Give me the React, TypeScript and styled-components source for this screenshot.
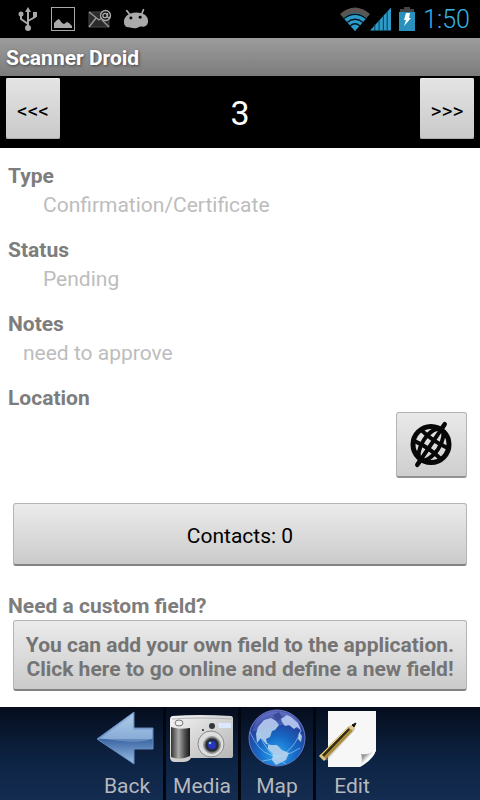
import React from "react";
import styled, { createGlobalStyle } from "styled-components";

const GlobalStyle = createGlobalStyle`
  * { box-sizing: border-box; }
  body { margin: 0; background: #fff; font-family: Roboto, "Noto Sans", sans-serif; font-size: 21px; line-height: 25px; }
  button { font: inherit; cursor: pointer; }
  svg { display: block; overflow: visible; }
`;

const Screen = styled.div`
  display: flex;
  flex-direction: column;
  min-height: 100vh;
`;

const StatusBar = styled.header`
  display: flex;
  justify-content: space-between;
  align-items: center;
  height: 38px;
  padding: 0 10px 0 18px;
  background: #000;
`;

const StatusGroup = styled.div<{ $gap: number }>`
  display: flex;
  align-items: center;
  gap: ${(p) => p.$gap}px;
`;

const Clock = styled.time`
  margin-left: 8px;
  color: #33b5e5;
  font-size: 25px;
  line-height: 36px;
  padding-top: 2px;
  font-weight: 300;
`;

const TitleBar = styled.h1`
  margin: 0;
  height: 38px;
  padding: 0 6px;
  background: linear-gradient(#9c9c9c, #7c7c7c);
  color: #fff;
  font-size: 21px;
  line-height: 40px;
  font-weight: 700;
  text-shadow: 1px 1px 3px #444;
`;

const Pager = styled.nav`
  display: flex;
  justify-content: space-between;
  align-items: flex-start;
  height: 72px;
  padding: 2px 6px;
  background: #000;
`;

const PageNumber = styled.span`
  color: #fff;
  font-size: 34px;
  line-height: 70px;
`;

const PagerButton = styled.button`
  width: 54px;
  height: 61px;
  padding: 6px 0 0;
  border: 0;
  border-radius: 2px;
  background: linear-gradient(#e4e4e4, #c9c9c9);
  box-shadow: inset 0 1px #eee, inset 0 -1px #aaa;
  color: #000;
  font-size: 21px;
`;

const Content = styled.main`
  display: flex;
  flex-direction: column;
  flex: 1;
  padding: 16px 13px 15px 8px;
  background: #fff;
`;

const Fields = styled.dl`
  display: flex;
  flex-direction: column;
  margin: 0;
`;

const Field = styled.div`
  height: 74px;
`;

const FieldLabel = styled.dt`
  color: #7d7d7d;
  font-weight: 700;
  line-height: 25px;
`;

const FieldValue = styled.dd<{ $indent: number }>`
  margin: 4px 0 0;
  padding-left: ${(p) => p.$indent}px;
  color: #bdbdbd;
`;

const LocationField = styled.div`
  display: flex;
  flex-direction: column;
`;

const LocationValue = styled.dd`
  display: flex;
  justify-content: flex-end;
  margin: 1px 0 0;
  padding-bottom: 25px;
`;

const PanelButton = styled.button<{ $tall?: boolean }>`
  min-height: ${(p) => (p.$tall ? 71 : 63)}px;
  margin-left: 5px;
  padding: 4px 8px 0;
  border: 1px solid #b4b4b4;
  border-bottom: 2px solid #828282;
  border-radius: 3px;
  background: linear-gradient(#ebebeb, #cbcbcb);
  color: ${(p) => (p.$tall ? "#747474" : "#000")};
  font-weight: ${(p) => (p.$tall ? 700 : 400)};
  line-height: 24px;
`;

const GlobeButton = styled.button`
  display: grid;
  place-items: center;
  width: 71px;
  height: 66px;
  padding: 0;
  border: 1px solid #b4b4b4;
  border-bottom: 2px solid #929292;
  border-radius: 3px;
  background: linear-gradient(#e9e9e9, #cecece);
`;

const Prompt = styled.h2`
  margin: 28px 0 1px;
  color: #7d7d7d;
  font-size: 21px;
  line-height: 25px;
  font-weight: 700;
`;

const TabBar = styled.footer`
  display: flex;
  justify-content: center;
  height: 93px;
  padding-left: 2px;
  background: linear-gradient(#050d1d, #0d2445 60%, #142c50);
`;

const Tab = styled.button`
  display: flex;
  flex-direction: column;
  align-items: center;
  width: 75px;
  padding: 0;
  border: 0;
  border-right: 3px solid #02060f;
  background: transparent;
  background-clip: padding-box;
  color: #b5b8bd;
  line-height: 27px;

  &:last-child {
    border-right-color: transparent;
  }
`;

const TabIcon = styled.span`
  display: grid;
  place-items: center;
  flex-shrink: 0;
  height: 64px;
  margin-bottom: 2px;
`;

const UsbIcon = () => (
  <svg width="20" height="26" viewBox="0 0 20 26" fill="none" stroke="#a8a8a8" strokeWidth="2">
    <path d="M10 5v17M10 18l-7-5V8M10 15l7-4V8" />
    <path d="M10 1l3 5H7z" fill="#a8a8a8" stroke="none" />
    <circle cx="10" cy="22" r="3" fill="#a8a8a8" stroke="none" />
    <circle cx="3" cy="8" r="2.5" fill="#a8a8a8" stroke="none" />
    <path d="M15 6h4v5h-4z" fill="#a8a8a8" stroke="none" />
  </svg>
);

const PictureIcon = () => (
  <svg width="24" height="24" viewBox="0 0 24 24">
    <rect x="0.5" y="0.5" width="23" height="23" fill="none" stroke="#aaa" />
    <path d="M3 21v-5l3-3 2-1 3 4 2 1 3-2 2 1 3 3v2z" fill="#aaa" />
  </svg>
);

const MailIcon = () => (
  <svg width="22" height="20" viewBox="0 0 22 20" fill="none">
    <path d="M1 3h20v15H1z" fill="#2b2b2b" stroke="#484848" />
    <path d="M1 3l10 8 3-2M1 18l7-9M21 18l-7-7" stroke="#999" strokeWidth="1.4" />
    <circle cx="17.5" cy="6.5" r="5" fill="#111" stroke="#aaa" strokeWidth="1.3" />
    <circle cx="17" cy="6.5" r="2.2" stroke="#aaa" strokeWidth="1.3" />
    <path d="M19.5 4v4q2 2 3-1" stroke="#aaa" strokeWidth="1.3" />
  </svg>
);

const DroidIcon = () => (
  <svg width="26" height="22" viewBox="0 0 28 22">
    <path d="M4 2l4 5M22 1l-2 5" stroke="#aaa" strokeWidth="1.8" strokeLinecap="round" />
    <path d="M1 14C1 8 7 4 14 4s13 3 13 9c0 5-3 7-7 6-3 0-4 2-8 2-2 0-4-1-6-1-3 0-5-2-5-6z" fill="#aaa" />
    <circle cx="8.5" cy="10" r="1.6" />
    <circle cx="18.5" cy="9" r="1.6" />
  </svg>
);

const WifiIcon = () => (
  <svg width="30" height="24" viewBox="0 0 30 24">
    <path d="M0 7Q15-6 30 7L15 24z" fill="#5a5552" />
    <path d="M3.5 11Q15 1 26.5 11L15 24z" fill="#2d9bc8" />
    <path d="M4 11.5Q15 3 26 11.5M7 15.5Q15 9 23 15.5M10 19Q15 14.5 20 19" fill="none" stroke="#001722" strokeWidth="1.4" />
  </svg>
);

const SignalIcon = () => (
  <svg width="21" height="24" viewBox="0 0 22 24">
    <path d="M0 24L22 0v24z" fill="#2d9bc8" />
    <path d="M5 17v7M9.5 13v11M14 8v16M18 4v20" stroke="#07384d" />
  </svg>
);

const BatteryIcon = () => (
  <svg width="16" height="24" viewBox="0 0 16 24">
    <path d="M5 0h6v2h4v3H1V2h4z" fill="#454545" />
    <path d="M0 5h16v19H0z" fill="#2a91bc" />
    <path d="M7 6h4l-1 5h2l-7 8 2-6H5z" fill="#fff" />
  </svg>
);

const GridGlobeIcon = () => (
  <svg width="44" height="46" viewBox="0 0 44 46" fill="none" stroke="#070707">
    <circle cx="21" cy="22.5" r="18" strokeWidth="5" />
    <g transform="rotate(34 21 22.5)" strokeWidth="4">
      <ellipse cx="21" cy="22.5" rx="8.500" ry="18" />
      <path d="M21-1v46M5 16q16 3 32 0M5 29q16-3 32 0" />
      <path d="M21-2v5M21 42v5" strokeWidth="4.5" strokeLinecap="round" />
    </g>
  </svg>
);

const BackIcon = () => (
  <svg width="60" height="56" viewBox="0 0 60 56">
    <defs>
      <linearGradient id="arrow" x1="0" y1="0" x2="0" y2="1">
        <stop offset="0" stopColor="#a9c8e8" />
        <stop offset=".52" stopColor="#6f98cc" />
        <stop offset=".53" stopColor="#3c66a4" />
        <stop offset="1" stopColor="#9dc0e8" />
      </linearGradient>
    </defs>
    <path d="M0 28L37 1v16h19v21H37v15z" fill="url(#arrow)" stroke="#6589bd" />
    <path d="M4 27L36 5v14h19v9Q39 34 4 27z" fill="#d5e7f8" opacity=".25" />
  </svg>
);

const CameraIcon = () => (
  <svg width="66" height="50" viewBox="0 0 66 50">
    <defs>
      <linearGradient id="grip">
        <stop offset="0" stopColor="#333" />
        <stop offset=".4" stopColor="#aaa" />
        <stop offset=".7" stopColor="#555" />
        <stop offset="1" stopColor="#171717" />
      </linearGradient>
      <linearGradient id="body" x1="0" y1="0" x2="1" y2="1">
        <stop offset="0" stopColor="#f4f4f4" />
        <stop offset="1" stopColor="#b2b2b2" />
      </linearGradient>
    </defs>
    <path d="M3 2Q30 0 62 2q2 0 2 3v37q0 2-3 2H22q-2 4-8 4H6q-5 0-5-5V5q0-2 2-3z" fill="url(#body)" />
    <path d="M2 13q8 3 19 1v28q-10 5-19 1z" fill="url(#grip)" />
    <path d="M3 5Q30 3 63 5" fill="none" stroke="#b4b4b4" />
    <ellipse cx="10" cy="9" rx="4" ry="3" fill="#eee" stroke="#777" />
    <circle cx="34" cy="16" r="1" fill="#222" />
    <circle cx="43" cy="12" r="3" fill="#32363b" />
    <path d="M49 9h13v5H50z" fill="#dce8ff" />
    <circle cx="42" cy="30" r="13" fill="#dfdfdf" stroke="#898989" />
    <circle cx="43" cy="31" r="10" fill="#999" stroke="#ddd" strokeWidth="2" />
    <circle cx="43" cy="31" r="7" fill="#222d39" stroke="#555" />
    <circle cx="43" cy="31" r="4" fill="#2930c2" />
    <circle cx="41" cy="29" r="1.3" fill="#7ed1ce" />
  </svg>
);

const EarthIcon = () => (
  <svg width="60" height="62" viewBox="1 0 60 62">
    <defs>
      <radialGradient id="earth" cx=".5" cy=".8" r=".85">
        <stop offset="0" stopColor="#2ba8f2" />
        <stop offset=".4" stopColor="#1768c5" />
        <stop offset=".75" stopColor="#243b96" />
        <stop offset="1" stopColor="#6a72c5" />
      </radialGradient>
    </defs>
    <circle cx="31" cy="30" r="28" fill="url(#earth)" stroke="#6676c4" />
    <path d="M12 19l6-7 7-2 5 3 3 4-4 5-3 1-2 6-4 2 1 4 4 2-5-1-5-6-4 5-1-9zM22 37l9 0 5 5 7 3-3 7-6 3-4 2-4-5 1-6-5-5zM35 11l6-4 4 2 7 6 3 7-4-3-3 2-5-4-4 1-3-4zM53 24l3 4-1 6-3-3z" fill="#b9d2ec" opacity=".9" />
    <path d="M27 7l6-3 3 5-5 4z" fill="#162d76" />
    <path d="M4 24Q20 62 54 40M12 23Q21 48 40 56M55 22Q46 50 16 53" fill="none" stroke="#a9dcfa" opacity=".6" />
    <path d="M6 24Q10 4 31 4t25 20Q41 10 6 24z" fill="#b8b7ff" opacity=".22" />
  </svg>
);

const EditIcon = () => (
  <svg width="66" height="58" viewBox="0 0 66 58">
    <defs>
      <linearGradient id="curl" x1="0" y1="0" x2="1" y2="1">
        <stop offset=".3" stopColor="#999" />
        <stop offset=".5" stopColor="#fff" />
        <stop offset="1" stopColor="#c9c9c9" />
      </linearGradient>
    </defs>
    <path d="M9 1h48v40L41 57H9z" fill="#f7f7f7" />
    <path d="M41 57q3-6 1-13 8 1 15-4-2 9-16 17z" fill="url(#curl)" />
    <path d="M6 49L35 17" stroke="#aaa" strokeWidth="5" opacity=".4" />
    <path d="M1 45L29 17l8-4-3 8L6 50z" fill="#ab8d3c" />
    <path d="M3 47L30 19" stroke="#302a17" strokeWidth="2.5" />
    <path d="M2 45L29 18" stroke="#e7d37d" />
    <path d="M29 17l8-4-3 8z" fill="#dfc590" />
    <path d="M33 15l4-2-2 4z" fill="#111" stroke="#111" />
    <path d="M1 45l5 5" stroke="#d8c582" strokeWidth="3" />
  </svg>
);

const fields = [
  { label: "Type", value: "Confirmation/Certificate", indent: 35 },
  { label: "Status", value: "Pending", indent: 35 },
  { label: "Notes", value: "need to approve", indent: 15 },
];

const tabs = [
  { label: "Back", Icon: BackIcon },
  { label: "Media", Icon: CameraIcon },
  { label: "Map", Icon: EarthIcon },
  { label: "Edit", Icon: EditIcon },
];

export default function App() {
  return (
    <Screen>
      <GlobalStyle />
      <StatusBar>
        <StatusGroup $gap={13}>
          <UsbIcon />
          <PictureIcon />
          <MailIcon />
          <DroidIcon />
        </StatusGroup>
        <StatusGroup $gap={0}>
          <StatusGroup $gap={8}>
            <StatusGroup $gap={0}>
              <WifiIcon />
              <SignalIcon />
            </StatusGroup>
            <BatteryIcon />
          </StatusGroup>
          <Clock>1:50</Clock>
        </StatusGroup>
      </StatusBar>
      <TitleBar>Scanner Droid</TitleBar>
      <Pager>
        <PagerButton aria-label="Previous">&lt;&lt;&lt;</PagerButton>
        <PageNumber>3</PageNumber>
        <PagerButton aria-label="Next">&gt;&gt;&gt;</PagerButton>
      </Pager>
      <Content>
        <Fields>
          {fields.map((field) => (
            <Field key={field.label}>
              <FieldLabel>{field.label}</FieldLabel>
              <FieldValue $indent={field.indent}>{field.value}</FieldValue>
            </Field>
          ))}
          <LocationField>
            <FieldLabel>Location</FieldLabel>
            <LocationValue>
              <GlobeButton aria-label="Set location">
                <GridGlobeIcon />
              </GlobeButton>
            </LocationValue>
          </LocationField>
        </Fields>
        <PanelButton>Contacts: 0</PanelButton>
        <Prompt>Need a custom field?</Prompt>
        <PanelButton $tall>
          You can add your own field to the application.
          <br />
          Click here to go online and define a new field!
        </PanelButton>
      </Content>
      <TabBar>
        {tabs.map(({ label, Icon }) => (
          <Tab key={label}>
            <TabIcon>
              <Icon />
            </TabIcon>
            {label}
          </Tab>
        ))}
      </TabBar>
    </Screen>
  );
}
